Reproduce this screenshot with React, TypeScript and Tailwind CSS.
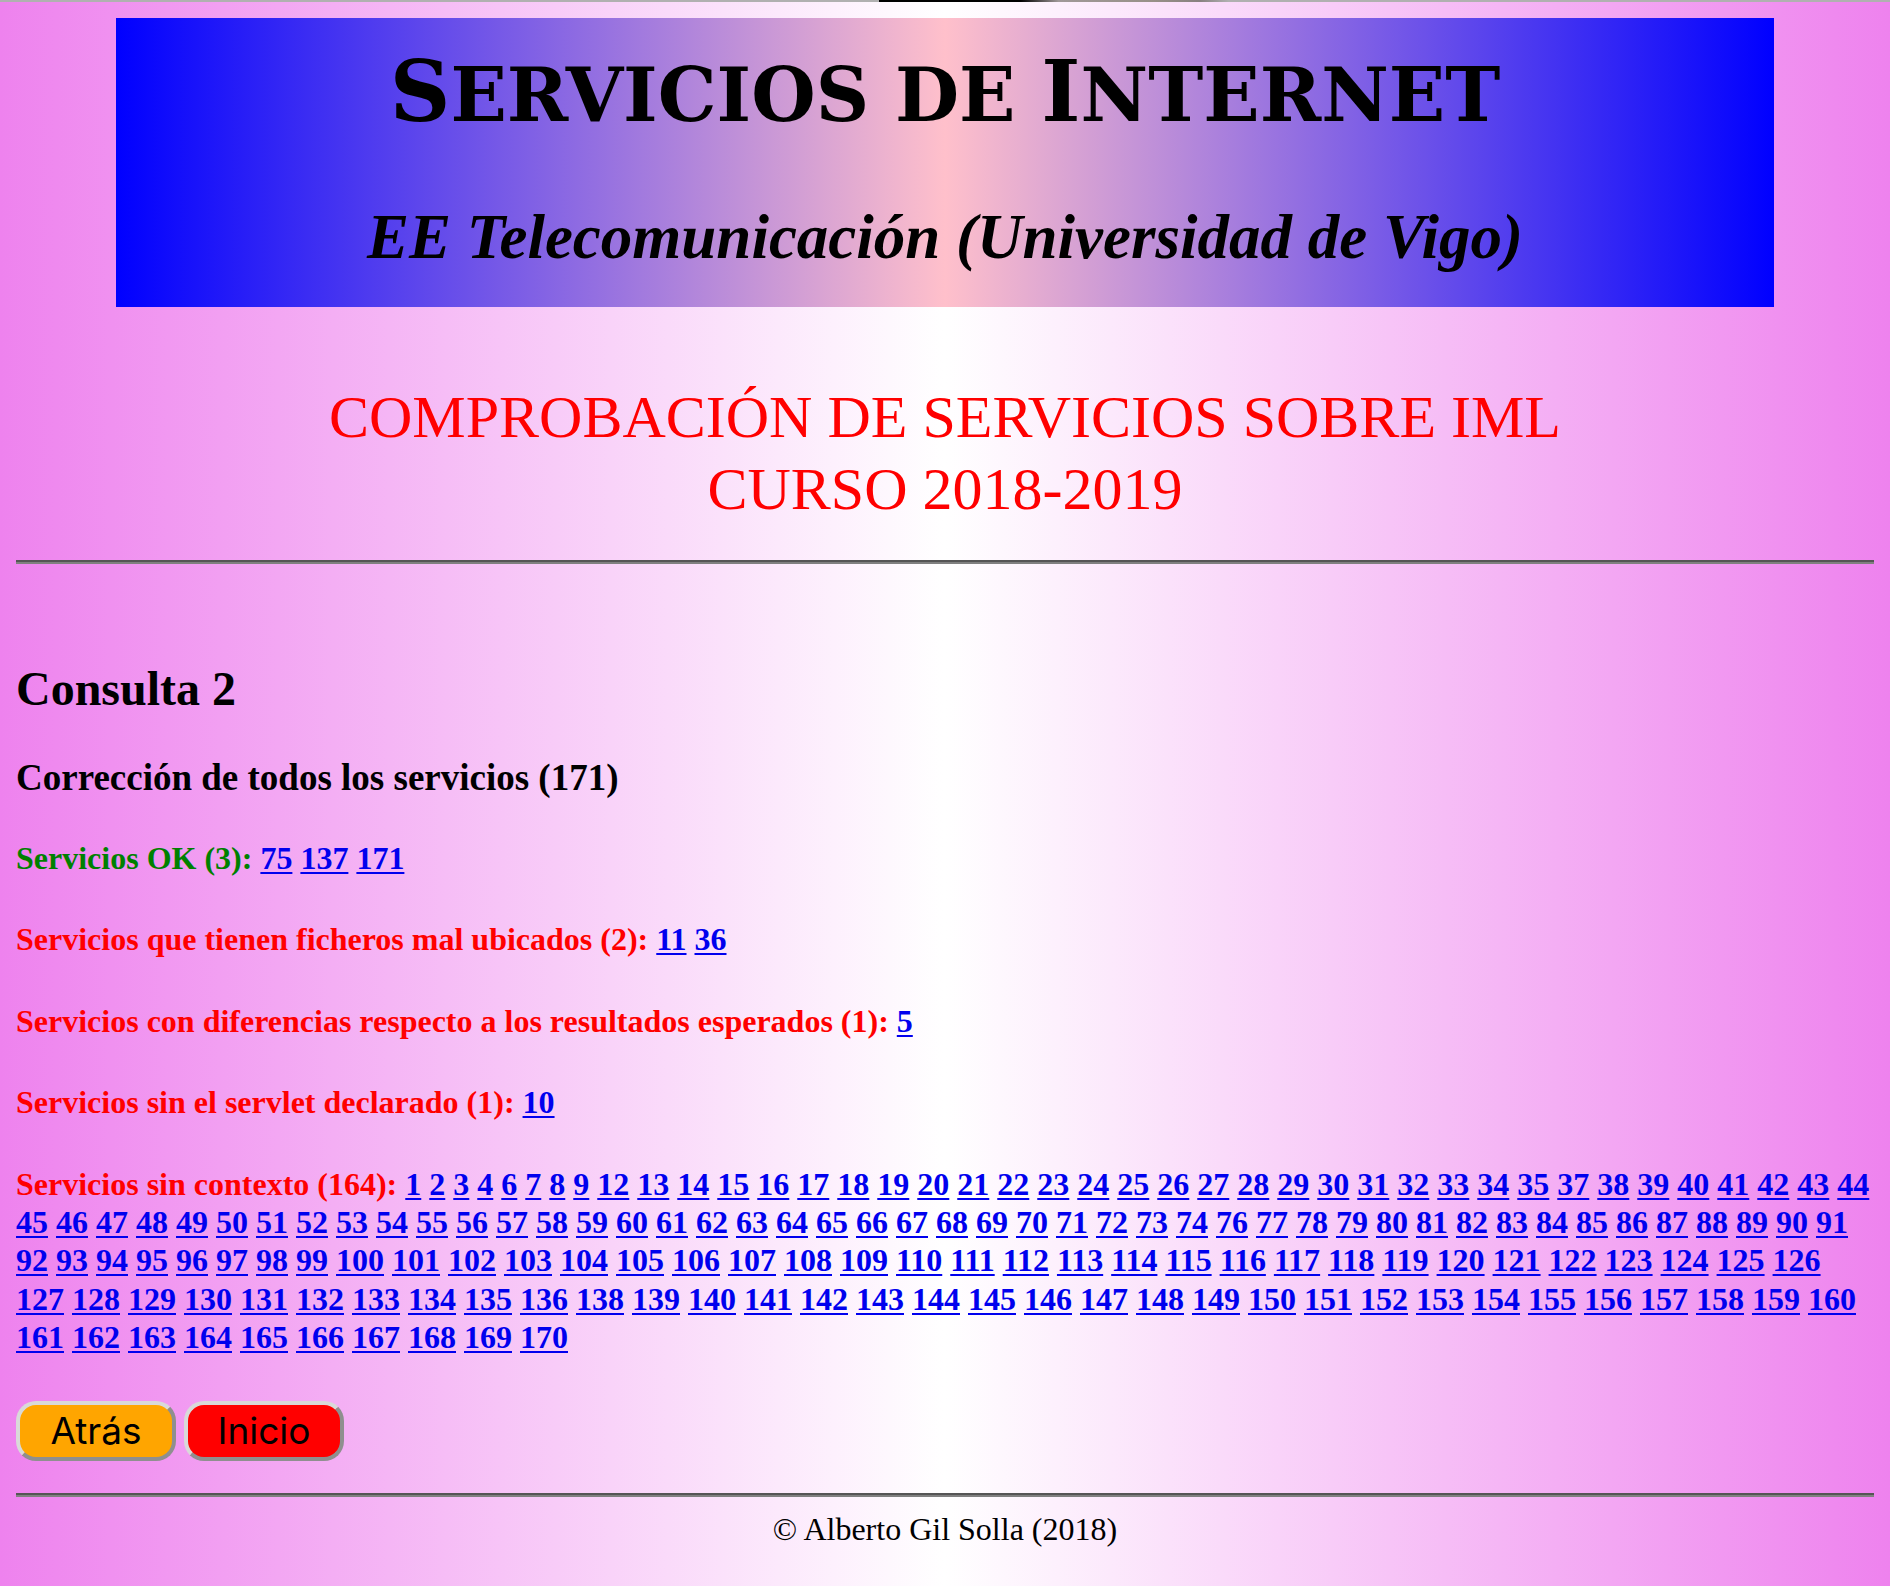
type ServiceGroup = { label: string; ids: number[]; ok?: boolean };

const range = (from: number, to: number) =>
  Array.from({ length: to - from + 1 }, (_, i) => from + i);

const classified = [5, 10, 11, 36, 75, 137, 171];

const groups: ServiceGroup[] = [
  { label: "Servicios OK (3):", ids: [75, 137, 171], ok: true },
  { label: "Servicios que tienen ficheros mal ubicados (2):", ids: [11, 36] },
  { label: "Servicios con diferencias respecto a los resultados esperados (1):", ids: [5] },
  { label: "Servicios sin el servlet declarado (1):", ids: [10] },
  {
    label: "Servicios sin contexto (164):",
    ids: range(1, 170).filter((n) => !classified.includes(n)),
  },
];

function Rule() {
  return <hr className="h-1 border-0 border-t-2 border-[#555555] bg-[#808080]" />;
}

function Banner() {
  return (
    <header className="mx-[100px] mt-4 flex h-[289px] flex-col items-center bg-[linear-gradient(to_right,blue,pink,blue)] pt-[30px] whitespace-nowrap text-black">
      <h1 className="font-['Copperplate','DejaVu_Serif'] text-[74px] leading-[88px] font-bold uppercase">
        <span className="text-[84px]">S</span>ervicios de <span className="text-[84px]">I</span>nternet
      </h1>
      <p className="mt-[58px] font-['Brush_Script_MT','Liberation_Serif'] text-[63px] leading-[80px] font-bold italic">
        EE Telecomunicación (Universidad de Vigo)
      </p>
    </header>
  );
}

function Group({ label, ids, ok }: ServiceGroup) {
  return (
    <h4 className={ok ? "font-bold text-[#008000]" : "font-bold text-[#ff0000]"}>
      {label}
      {ids.map((id) => (
        <span key={id}>
          {" "}
          <a href={`#servicio-${id}`} className="text-[#0000ee] underline decoration-2 underline-offset-[3px]">
            {id}
          </a>
        </span>
      ))}
    </h4>
  );
}

const buttonClass =
  "h-[60px] w-40 rounded-[20px] border-4 border-t-[#d9d9d9] border-r-[#8f8f8f] border-b-[#8f8f8f] border-l-[#d9d9d9] text-center font-['Inter',sans-serif] text-[37px] leading-none text-black";

export default function App() {
  return (
    <div className="min-h-screen bg-[linear-gradient(to_right,violet,white,violet)] font-['Liberation_Serif',serif] text-[32px] leading-[1.2] text-black">
      <div className="h-[2px] bg-[linear-gradient(to_right,#b0b0b0_46.5%,#000000_46.5%,#000000_54%,#a09898_56%,#989088_61%,#888080_63.5%,#b0b0b0_65%)]" />
      <div className="px-4">
        <Banner />
        <p className="mt-[74px] mb-[35px] text-center text-[60px] text-[#ff0000]">
          COMPROBACIÓN DE SERVICIOS SOBRE IML
          <br />
          CURSO 2018-2019
        </p>
        <Rule />
        <main>
          <h2 className="mt-24 text-[48px] font-bold">Consulta 2</h2>
          <h3 className="mt-[38px] text-[37px] font-bold">Corrección de todos los servicios (171)</h3>
          <div className="mt-[39px] flex flex-col gap-[43px]">
            {groups.map((g) => (
              <Group key={g.label} {...g} />
            ))}
          </div>
          <div className="mt-11 mb-8 flex gap-2">
            <button type="button" className={`${buttonClass} bg-[#ffa500]`}>
              Atrás
            </button>
            <button type="button" className={`${buttonClass} bg-[#ff0000]`}>
              Inicio
            </button>
          </div>
        </main>
        <Rule />
        <footer className="mt-[13px] text-center">© Alberto Gil Solla (2018)</footer>
      </div>
    </div>
  );
}
